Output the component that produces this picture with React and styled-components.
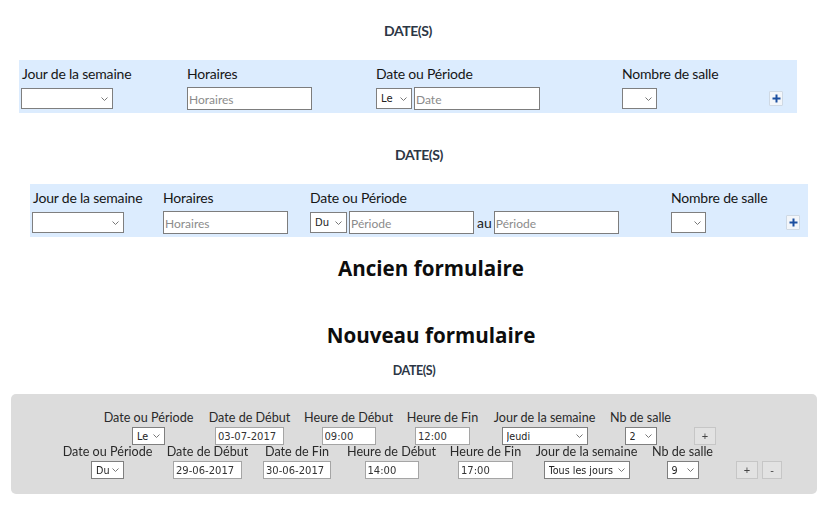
import React from 'react';
import styled, { createGlobalStyle } from 'styled-components';

const chevron = encodeURIComponent(
    '<svg xmlns="http://www.w3.org/2000/svg" width="7" height="4" viewBox="0 0 7 4"><path d="M.5 .5l3 3 3-3" fill="none" stroke="#777" stroke-width="1"/></svg>'
);

const GlobalStyle = createGlobalStyle`
  html, body { margin: 0; padding: 0; background: #fff; }
  body { width: 824px; height: 516px; overflow: hidden; font-family: Lato, "Liberation Sans", sans-serif; }
`;

const Page = styled.div`
  display: flex;
  flex-direction: column;
`;

const Section = styled.section`
  width: ${(p) => p.$width}px;
  margin-left: ${(p) => p.$left}px;
  margin-top: ${(p) => p.$top}px;
`;

const SectionTitle = styled.h3`
  margin: 0;
  height: 18px;
  line-height: 18px;
  text-align: center;
  font-size: ${(p) => p.$size || 14}px;
  font-weight: 700;
  letter-spacing: -0.4px;
  color: #2c3645;
  margin-bottom: ${(p) => p.$gap}px;
`;

const BluePanel = styled.div`
  display: grid;
  grid-template-columns: ${(p) => p.$columns};
  height: 53px;
  padding-left: 2px;
  box-sizing: border-box;
  background: #dcecfe;
`;

const Column = styled.div`
  display: flex;
  flex-direction: column;
  align-items: flex-start;
`;

const BlueLabel = styled.label`
  height: 27px;
  padding-left: ${(p) => p.$inset || 0}px;
  line-height: 28px;
  font-size: 14px;
  letter-spacing: -0.2px;
  color: #161616;
  white-space: nowrap;
`;

const FieldRow = styled.div`
  display: flex;
  align-items: center;
  gap: 2px;
  height: 23px;
`;

const Select = styled.select`
  appearance: none;
  box-sizing: border-box;
  width: ${(p) => p.$width}px;
  height: ${(p) => p.$height || 21}px;
  padding: 0 0 0 4px;
  border: 1px solid #7f7f7f;
  border-radius: 0;
  background: #fff url("data:image/svg+xml,${chevron}") no-repeat right 4px center;
  font-family: "DejaVu Sans", sans-serif;
  font-size: ${(p) => p.$font || 10}px;
  color: #222;
`;

const TextInput = styled.input`
  box-sizing: border-box;
  width: ${(p) => p.$width}px;
  height: 23px;
  padding: 2px 1px 0;
  border: 1px solid #7d7d7d;
  background: #fff;
  font-family: Lato, sans-serif;
  font-size: 12px;
  &::placeholder { color: #8b8b8b; opacity: 1; }
`;

const Au = styled.span`
  font-size: 14px;
  color: #1c1c1c;
  margin-left: 1px;
`;

const PlusButton = styled.button`
  display: flex;
  align-items: center;
  justify-content: center;
  box-sizing: border-box;
  width: 14px;
  height: 15px;
  margin-left: ${(p) => p.$left}px;
  padding: 0;
  border: 1px solid #cfd9e4;
  border-radius: 1px;
  background: #f3f6fa;
  color: #1c4fa0;
  svg { display: block; }
`;

const Caption = styled.div`
  padding-left: 38px;
  text-align: center;
  font-family: "Open Sans", sans-serif;
  font-size: 20.6px;
  font-weight: 700;
  line-height: 28px;
  color: #0d0d0d;
  margin-top: ${(p) => p.$top}px;
`;

const GreyPanel = styled.div`
  display: flex;
  flex-direction: column;
  box-sizing: border-box;
  height: 100px;
  padding-top: 17px;
  border-radius: 5px;
  background: #dcdcdc;
  filter: blur(0.35px);
`;

const GreyRow = styled.div`
  display: flex;
  align-items: flex-end;
  height: 34px;
  padding-left: ${(p) => p.$indent}px;
`;

const GreyField = styled.div`
  display: flex;
  flex-direction: column;
  align-items: center;
  width: ${(p) => p.$width}px;
  margin-right: ${(p) => p.$gap ?? 14}px;
`;

const GreyLabel = styled.label`
  height: 16px;
  line-height: 14px;
  font-size: 12.6px;
  color: #2a2a2a;
  white-space: nowrap;
`;

const GreyInput = styled.input`
  box-sizing: border-box;
  width: ${(p) => p.$width}px;
  height: 18px;
  padding: 0 2px;
  border: 1px solid #a5a5a5;
  background: #fff;
  font-family: "DejaVu Sans", sans-serif;
  font-size: 10px;
  color: #333;
`;

const GreyButton = styled.button`
  box-sizing: border-box;
  width: ${(p) => p.$width}px;
  height: 18px;
  margin-left: ${(p) => p.$left}px;
  padding: 0;
  border: 1px solid #c6c6c6;
  background: #e2e2e2;
  font-size: 11px;
  color: #444;
`;

const Plus = () => (
    <svg width="9" height="9" viewBox="0 0 9 9" aria-hidden="true">
        <path d="M4.5 .5v8M.5 4.5h8" stroke="currentColor" strokeWidth="2" />
    </svg>
);

const Dropdown = ({ value, width, height, font }) => (
    <Select $width={width} $height={height} $font={font} defaultValue={value}>
        <option value={value}>{value}</option>
    </Select>
);

const Field = ({ label, width, gap, children }) => (
    <GreyField $width={width} $gap={gap}>
        <GreyLabel>{label}</GreyLabel>
        {children}
    </GreyField>
);

const grey = (width) => ({ width, height: 18, font: 9.6 });

const App = () => (
    <Page>
        <GlobalStyle />

        <Section $left={19} $width={778} $top={22}>
            <SectionTitle $gap={20}>DATE(S)</SectionTitle>
            <BluePanel $columns="166px 189px 246px 1fr">
                <Column>
                    <BlueLabel $inset={1}>Jour de la semaine</BlueLabel>
                    <FieldRow><Dropdown value="" width={92} /></FieldRow>
                </Column>
                <Column>
                    <BlueLabel>Horaires</BlueLabel>
                    <TextInput $width={125} placeholder="Horaires" />
                </Column>
                <Column>
                    <BlueLabel>Date ou Période</BlueLabel>
                    <FieldRow>
                        <Dropdown value="Le" width={36} />
                        <TextInput $width={126} placeholder="Date" />
                    </FieldRow>
                </Column>
                <Column>
                    <BlueLabel>Nombre de salle</BlueLabel>
                    <FieldRow>
                        <Dropdown value="" width={35} />
                        <PlusButton $left={110}><Plus /></PlusButton>
                    </FieldRow>
                </Column>
            </BluePanel>
        </Section>

        <Section $left={30} $width={778} $top={33}>
            <SectionTitle $gap={20}>DATE(S)</SectionTitle>
            <BluePanel $columns="131px 147px 361px 1fr">
                <Column>
                    <BlueLabel $inset={1}>Jour de la semaine</BlueLabel>
                    <FieldRow><Dropdown value="" width={92} /></FieldRow>
                </Column>
                <Column>
                    <BlueLabel>Horaires</BlueLabel>
                    <TextInput $width={125} placeholder="Horaires" />
                </Column>
                <Column>
                    <BlueLabel>Date ou Période</BlueLabel>
                    <FieldRow>
                        <Dropdown value="Du" width={37} />
                        <TextInput $width={125} placeholder="Période" />
                        <Au>au</Au>
                        <TextInput $width={125} placeholder="Période" />
                    </FieldRow>
                </Column>
                <Column>
                    <BlueLabel>Nombre de salle</BlueLabel>
                    <FieldRow>
                        <Dropdown value="" width={35} />
                        <PlusButton $left={78}><Plus /></PlusButton>
                    </FieldRow>
                </Column>
            </BluePanel>
        </Section>

        <Caption $top={17}>Ancien formulaire</Caption>
        <Caption $top={39}>Nouveau formulaire</Caption>

        <Section $left={11} $width={806} $top={13}>
            <SectionTitle $size={12.5} $gap={14}>DATE(S)</SectionTitle>
            <GreyPanel>
                <GreyRow $indent={93}>
                    <Field label="Date ou Période" width={89} gap={16}><Dropdown value="Le" {...grey(33)} /></Field>
                    <Field label="Date de Début" width={81}><GreyInput $width={69} defaultValue="03-07-2017" /></Field>
                    <Field label="Heure de Début" width={89}><GreyInput $width={54} defaultValue="09:00" /></Field>
                    <Field label="Heure de Fin" width={71} gap={16}><GreyInput $width={55} defaultValue="12:00" /></Field>
                    <Field label="Jour de la semaine" width={101} gap={15}><Dropdown value="Jeudi" {...grey(86)} /></Field>
                    <Field label="Nb de salle" width={61} gap={0}><Dropdown value="2" {...grey(32)} /></Field>
                    <GreyButton $width={22} $left={23}>+</GreyButton>
                </GreyRow>
                <GreyRow $indent={52}>
                    <Field label="Date ou Période" width={89} gap={15}><Dropdown value="Du" {...grey(33)} /></Field>
                    <Field label="Date de Début" width={81} gap={15}><GreyInput $width={69} defaultValue="29-06-2017" /></Field>
                    <Field label="Date de Fin" width={68} gap={16}><GreyInput $width={68} defaultValue="30-06-2017" /></Field>
                    <Field label="Heure de Début" width={89}><GreyInput $width={54} defaultValue="14:00" /></Field>
                    <Field label="Heure de Fin" width={71} gap={15}><GreyInput $width={55} defaultValue="17:00" /></Field>
                    <Field label="Jour de la semaine" width={101} gap={15}><Dropdown value="Tous les jours" {...grey(86)} /></Field>
                    <Field label="Nb de salle" width={61} gap={0}><Dropdown value="9" {...grey(32)} /></Field>
                    <GreyButton $width={22} $left={23}>+</GreyButton>
                    <GreyButton $width={20} $left={4}>-</GreyButton>
                </GreyRow>
            </GreyPanel>
        </Section>
    </Page>
);

export default App;
